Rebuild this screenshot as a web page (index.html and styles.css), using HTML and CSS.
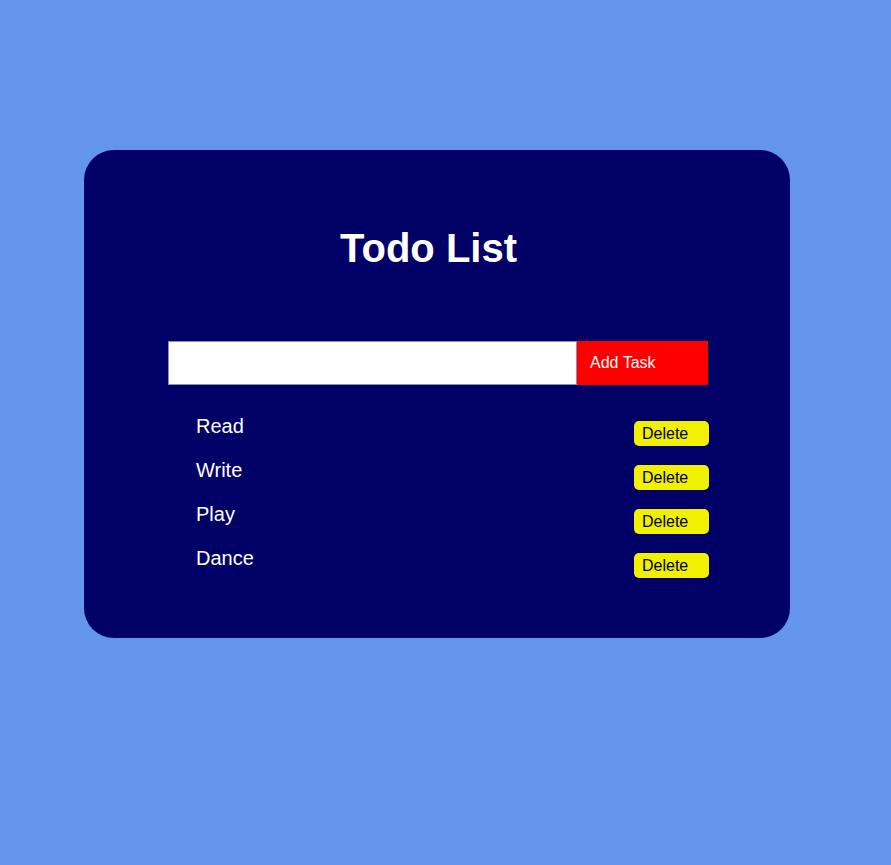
FILE: index.html
```html
<!DOCTYPE html>
<html>
<head>
  <title>Todo List</title>
  <link rel="stylesheet" href="styles.css">
</head>
<body>
  <div class="container">
    <h1>Todo List</h1>

    <div class="input-row">
      <input id="task-input" type="text">
      <button id="add-button">Add Task</button>
    </div>

    <ul id="task-list">
      <li><span>Read</span><button class="delete">Delete</button></li>
      <li><span>Write</span><button class="delete">Delete</button></li>
      <li><span>Play</span><button class="delete">Delete</button></li>
      <li><span>Dance</span><button class="delete">Delete</button></li>
    </ul>
  </div>
</body>
</html>
```

FILE: styles.css
```css
body {
  margin: 0;
  background-color: #6495ed;
  font-family: "Liberation Sans", Arial, sans-serif;
}

.container {
  box-sizing: border-box;
  width: 706px;
  height: 488px;
  margin: 150px 0 0 84px;
  padding: 76px 82px 0 84px;
  background-color: #000066;
  border-radius: 30px;
}

h1 {
  margin: 0;
  padding-right: 19px;
  color: #ffffff;
  font-size: 40px;
  text-align: center;
}

.input-row {
  display: flex;
  margin-top: 70px;
}

#task-input {
  box-sizing: border-box;
  width: 409px;
  height: 44px;
  border: 1px solid #8890b8;
  margin: 0;
  font-size: 16px;
}

#add-button {
  box-sizing: border-box;
  width: 131px;
  height: 44px;
  margin: 0;
  padding: 0 0 0 13px;
  border: none;
  background-color: #ff0000;
  color: #ffffff;
  font-family: "Liberation Sans", Arial, sans-serif;
  font-size: 16px;
  text-align: left;
}

#task-list {
  list-style: none;
  margin: 28px 0 0 0;
  padding: 0 0 0 28px;
}

#task-list li {
  display: flex;
  justify-content: space-between;
  align-items: flex-start;
  height: 44px;
  color: #ffffff;
  font-size: 20px;
}

#task-list li span {
  padding-top: 2px;
}

.delete {
  box-sizing: border-box;
  width: 75px;
  height: 25px;
  margin: 8px -1px 0 0;
  padding: 0 0 0 8px;
  border: none;
  border-radius: 5px;
  background-color: #f0f000;
  color: #000000;
  font-family: "Liberation Sans", Arial, sans-serif;
  font-size: 16px;
  text-align: left;
}
```
